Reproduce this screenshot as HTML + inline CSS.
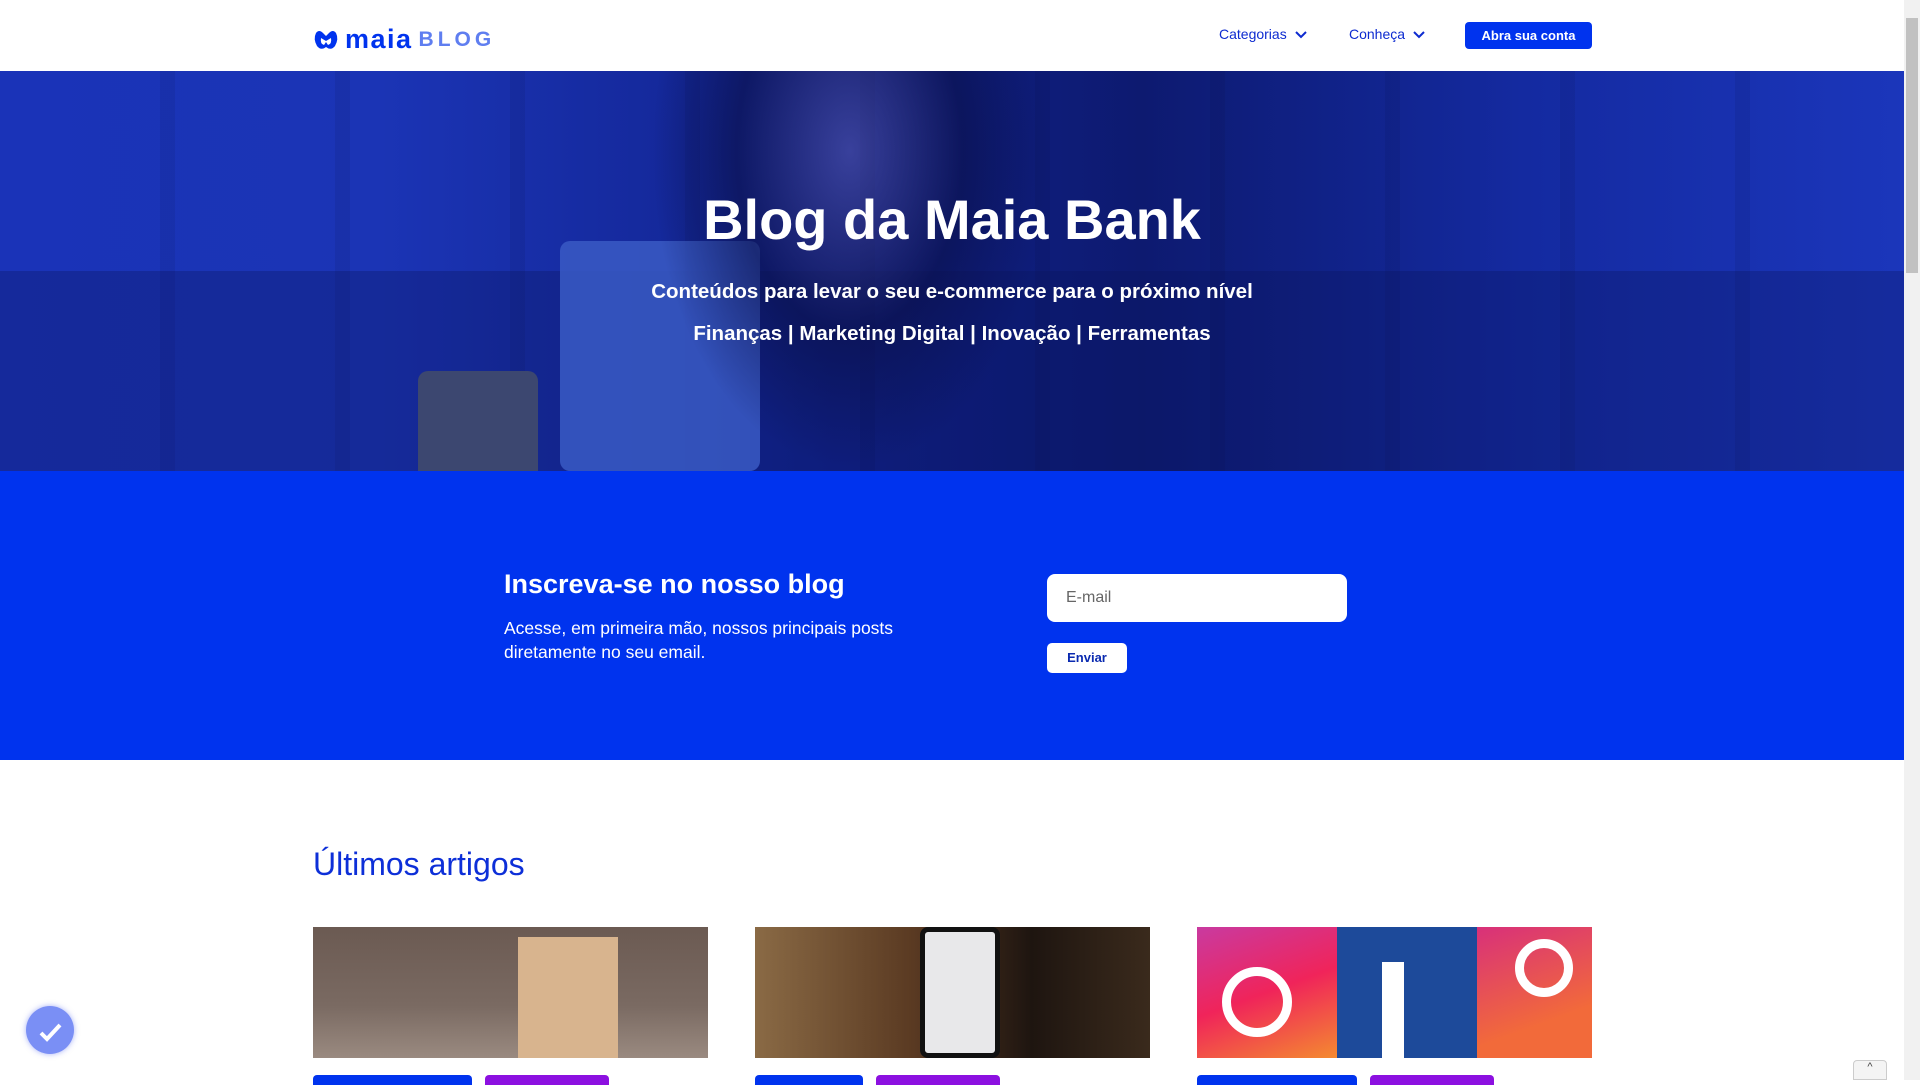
<!DOCTYPE html>
<html><head><meta charset="utf-8"><style>
*{margin:0;padding:0;box-sizing:border-box}
body{width:1920px;height:1080px;overflow:hidden;font-family:"Liberation Sans",sans-serif;background:#fff;position:relative}
.hdr{position:absolute;left:0;top:0;width:1904px;height:71px;background:#fff}
.sb{position:absolute;right:0;top:0;width:16px;height:1080px;background:#f1f1f1}
.sb i{position:absolute;left:2px;top:18px;width:12px;height:255px;background:#c1c1c1}
.logo{position:absolute;left:313px;top:24px;display:flex;align-items:center}
.logo .m{font-weight:bold;font-size:27px;color:#0033ee;letter-spacing:1.5px;margin-left:6px}
.logo .b{font-weight:bold;font-size:21px;color:#5f7ef0;letter-spacing:4px;margin-left:6px}
.nav{position:absolute;top:26px;font-size:14px;color:#0d2bd0}
.nav svg{vertical-align:middle;margin-left:8px}
.btn{position:absolute;left:1465px;top:22px;width:127px;height:27px;background:#0033ee;border-radius:4px;color:#fff;font-weight:bold;font-size:13px;text-align:center;line-height:27px}
.hero{position:absolute;left:0;top:71px;width:1904px;height:400px;background:linear-gradient(90deg,#1a33b8 0%,#1b34b5 20%,#10218a 45%,#0d1a70 60%,#142aa0 80%,#1b36bb 100%);overflow:hidden}
.hero .c{position:absolute;left:0;width:100%;text-align:center;color:#fff;font-weight:bold}
.blue{position:absolute;left:0;top:471px;width:1904px;height:289px;background:#0033ee;color:#fff}
.inp{position:absolute;left:1047px;top:574px;width:300px;height:48px;background:#fff;border-radius:8px;color:#666;font-size:16px;line-height:48px;padding-left:19px}
.env{position:absolute;left:1047px;top:643px;width:80px;height:30px;background:#fff;border-radius:5px;color:#0a2ab0;font-size:13px;font-weight:bold;text-align:center;line-height:30px}
.card{position:absolute;top:927px;width:395px;height:131px;overflow:hidden}
.tag{position:absolute;top:1075px;height:10px;border-radius:4px 4px 0 0}
</style></head><body>
<div class="hdr">
 <div class="logo">
  <svg width="26" height="22" viewBox="0 0 26 22"><path d="M3 4 Q6 0 10 4 L13 7 L16 4 Q20 0 23 4 Q26 10 22 17 Q18 22 13 18 Q8 22 4 17 Q0 10 3 4Z" fill="#0033ee"/><path d="M8 9 Q7 15 11 16 L13 13 L15 16 Q19 15 18 9 L13 12Z" fill="#fff"/></svg>
  <span class="m">maia</span><span class="b">BLOG</span>
 </div>
 <div class="nav" style="left:1219px">Categorias<svg width="12" height="8" viewBox="0 0 12 8"><path d="M1 1l5 5 5-5" stroke="#0d2bd0" stroke-width="2" fill="none"/></svg></div>
 <div class="nav" style="left:1349px">Conheça<svg width="12" height="8" viewBox="0 0 12 8"><path d="M1 1l5 5 5-5" stroke="#0d2bd0" stroke-width="2" fill="none"/></svg></div>
 <div class="btn">Abra sua conta</div>
</div>
<div class="sb"><i></i></div>
<div class="hero">
 <div style="position:absolute;left:0;top:0;width:100%;height:400px;background:repeating-linear-gradient(90deg,rgba(0,0,0,0) 0,rgba(0,0,0,0) 160px,rgba(0,0,30,.08) 160px,rgba(0,0,30,.08) 175px)"></div>
 <div style="position:absolute;left:0;top:200px;width:100%;height:200px;background:rgba(10,20,90,.3)"></div>
 <div style="position:absolute;left:560px;top:170px;width:200px;height:230px;background:#3a5bc4;border-radius:10px;opacity:.85"></div>
 <div style="position:absolute;left:418px;top:300px;width:120px;height:100px;background:#3c4770;border-radius:10px 10px 0 0"></div>
 <div style="position:absolute;left:650px;top:0;width:400px;height:400px;background:radial-gradient(ellipse at 50% 20%,rgba(90,90,170,.55),rgba(10,15,70,.6) 40%,rgba(0,0,0,0) 70%)"></div>
 <div class="c" style="top:116px;font-size:56px">Blog da Maia Bank</div>
 <div class="c" style="top:209px;font-size:20.5px">Conteúdos para levar o seu e-commerce para o próximo nível</div>
 <div class="c" style="top:251px;font-size:20.5px">Finanças | Marketing Digital | Inovação | Ferramentas</div>
</div>
<div class="blue">
 <div style="position:absolute;left:504px;top:98px;font-size:27px;font-weight:bold">Inscreva-se no nosso blog</div>
 <div style="position:absolute;left:504px;top:145px;font-size:17.5px;line-height:24px">Acesse, em primeira mão, nossos principais posts<br>diretamente no seu email.</div>
</div>
<div class="inp">E-mail</div>
<div class="env">Enviar</div>
<div style="position:absolute;left:313px;top:846px;font-size:32px;color:#0d2fd8">Últimos artigos</div>
<div class="card" style="left:313px;background:linear-gradient(180deg,#6b5a52,#7a6a62 60%,#9a8a80)">
 <div style="position:absolute;left:205px;top:10px;width:100px;height:121px;background:#d8b48e"></div>
</div>
<div class="card" style="left:755px;background:linear-gradient(90deg,#8a6a45,#5a3a22 40%,#1e1510 70%,#3a2a1c)">
 <div style="position:absolute;left:165px;top:0;width:80px;height:131px;background:#e8e8ea;border:5px solid #111;border-radius:8px"></div>
</div>
<div class="card" style="left:1197px;background:#1d4a9a">
 <div style="position:absolute;left:0;top:0;width:140px;height:131px;background:linear-gradient(160deg,#c93aa0,#f0245a 50%,#f48a30)"></div>
 <div style="position:absolute;left:280px;top:0;width:115px;height:131px;background:linear-gradient(160deg,#d8307a,#f26a3a 70%)"></div>
 <div style="position:absolute;left:25px;top:40px;width:70px;height:70px;border:9px solid #fff;border-radius:50%"></div>
 <div style="position:absolute;left:318px;top:12px;width:58px;height:58px;border:9px solid #fff;border-radius:50%"></div>
 <div style="position:absolute;left:185px;top:35px;width:22px;height:96px;background:#fff"></div>
</div>
<div class="tag" style="left:313px;width:159px;background:#0033ee"></div>
<div class="tag" style="left:485px;width:124px;background:#8c10e0"></div>
<div class="tag" style="left:755px;width:108px;background:#0033ee"></div>
<div class="tag" style="left:876px;width:124px;background:#8c10e0"></div>
<div class="tag" style="left:1197px;width:160px;background:#0033ee"></div>
<div class="tag" style="left:1370px;width:124px;background:#8c10e0"></div>
<div style="position:absolute;left:26px;top:1006px;width:48px;height:48px;border-radius:50%;background:#7a8ff5;box-shadow:0 0 6px rgba(80,100,240,.5)">
 <svg width="48" height="48" viewBox="0 0 48 48"><path d="M15 27l6 6 13-14" stroke="#fff" stroke-width="4" fill="none"/></svg>
</div>
<div style="position:absolute;left:1853px;top:1060px;width:34px;height:20px;background:#f4f4f4;border:1px solid #ccc;border-radius:4px 4px 0 0;font-size:11px;text-align:center;color:#444">^</div>
</body></html>
